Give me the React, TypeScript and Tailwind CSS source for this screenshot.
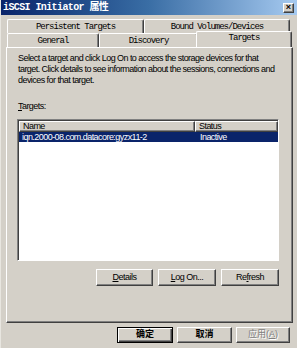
import React from 'react'

const sans = "font-['Liberation_Sans',Arial,sans-serif]"
const mono = "font-['Liberation_Mono','Noto_Sans_CJK_SC',monospace]"
const cjk = "font-['Liberation_Sans','Noto_Sans_CJK_SC',sans-serif]"

const raised =
  'border border-t-white border-l-white border-r-[#404040] border-b-[#404040] shadow-[inset_-1px_-1px_0_#808080]'

function Tab({ label, width, selected }: { label: string; width: string; selected?: boolean }) {
  return (
    <div
      className={`${width} ${
        selected ? 'relative z-10 -mx-[2px] -mt-[2px] h-[16px] -mb-px pt-[1px]' : 'h-[14px] pt-[2px]'
      } flex justify-center rounded-t-[2px] border-l border-t border-white border-r border-r-[#404040] bg-[#d4d0c8] shadow-[inset_-1px_0_0_#808080] ${mono} text-[9px] leading-[10px] tracking-[-1px] text-black`}
    >
      {label}
    </div>
  )
}

function Button({ children, width }: { children: React.ReactNode; width: string }) {
  return (
    <div className={`${width} h-[17px] flex items-center justify-center bg-[#d4d0c8] ${raised}`}>
      {children}
    </div>
  )
}

export default function App() {
  return (
    <div className="w-[297px] h-[348px] bg-[#d4d0c8] border-l border-l-[#e8e6e0] flex flex-col overflow-hidden">
      {/* Title bar */}
      <div className="h-[15px] flex items-center justify-between bg-gradient-to-r from-[#0a246a] via-[#3a6ea5] to-[#a6caf0] pl-[2px] pr-[3px]">
        <span className={`${mono} text-[10px] font-bold tracking-[-0.6px] text-white leading-none`}>iSCSI Initiator 属性</span>
        <div className={`w-[11px] h-[10px] flex items-center justify-center bg-[#d4d0c8] ${raised}`}>
          <span className={`${sans} text-[9px] font-bold leading-none text-black -mt-px`}>×</span>
        </div>
      </div>

      {/* Tab rows */}
      <div className="mt-[4px] pl-[6px] flex flex-col">
        <div className="flex">
          <Tab label="Persistent Targets" width="w-[137px]" />
          <Tab label="Bound Volumes/Devices" width="w-[146px]" />
        </div>
        <div className="flex">
          <Tab label="General" width="w-[92px]" />
          <Tab label="Discovery" width="w-[99px]" />
          <Tab label="Targets" width="w-[96px]" selected />
        </div>
      </div>

      {/* Panel */}
      <div className="ml-[5px] w-[287px] h-[276px] border border-t-white border-l-white border-r-[#404040] border-b-[#404040] shadow-[inset_-1px_-1px_0_#808080] pl-[10px] pt-[5px] flex flex-col">
        <p className={`${sans} ml-px text-[9px] leading-[11px] tracking-[-0.55px] text-black`}>
          Select a target and click Log On to access the storage devices for that
          <br />
          target. Click details to see information about the sessions, connections and
          <br />
          devices for that target.
        </p>
        <div className={`${sans} ml-px mt-[15px] text-[9px] leading-[11px] tracking-[-0.55px] text-black`}>
          <span className="underline">T</span>argets:
        </div>

        {/* List */}
        <div className="mt-[7px] w-[262px] h-[142px] bg-white border border-t-[#808080] border-l-[#808080] border-b-white border-r-white shadow-[inset_1px_1px_0_#404040] pl-px pt-px flex flex-col">
          <div className={`flex h-[11px] ${sans} text-[9px] leading-[9px] tracking-[-0.55px] text-black`}>
            <div className={`w-[176px] bg-[#d4d0c8] ${raised} pl-[3px]`}>Name</div>
            <div className={`w-[83px] bg-[#d4d0c8] ${raised} pl-[3px]`}>Status</div>
          </div>
          <div className={`flex h-[10px] w-[259px] bg-[#0a246a] ${sans} text-[9px] leading-[10px] tracking-[-0.55px] text-white`}>
            <div className="w-[176px] pl-[3px]">iqn.2000-08.com.datacore:gyzx11-2</div>
            <div className="w-[83px] pl-[5px]">Inactive</div>
          </div>
        </div>

        {/* Buttons */}
        <div className={`mt-[8px] w-[262px] flex justify-end gap-[5px] ${sans} text-[9px] tracking-[-0.5px] text-black`}>
          <Button width="w-[57px]">
            <span><span className="underline">D</span>etails</span>
          </Button>
          <Button width="w-[58px]">
            <span><span className="underline">L</span>og On...</span>
          </Button>
          <Button width="w-[58px]">
            <span>Re<span className="underline">f</span>resh</span>
          </Button>
        </div>
      </div>

      {/* Dialog buttons */}
      <div className={`mt-[4px] pl-[116px] flex gap-[4px] ${cjk} text-[9px] text-black`}>
        <div className="w-[56px] h-[16px] flex items-center justify-center bg-[#d4d0c8] border border-black shadow-[inset_1px_1px_0_#fff,inset_-1px_-1px_0_#404040,inset_-2px_-2px_0_#808080] font-bold">
          确定
        </div>
        <div className={`w-[55px] h-[16px] flex items-center justify-center bg-[#d4d0c8] ${raised} font-bold`}>
          取消
        </div>
        <div className={`w-[54px] h-[16px] flex items-center justify-center bg-[#d4d0c8] ${raised} text-[#808080] [text-shadow:1px_1px_0_#fff]`}>
          应用(<span className="underline">A</span>)
        </div>
      </div>
    </div>
  )
}
